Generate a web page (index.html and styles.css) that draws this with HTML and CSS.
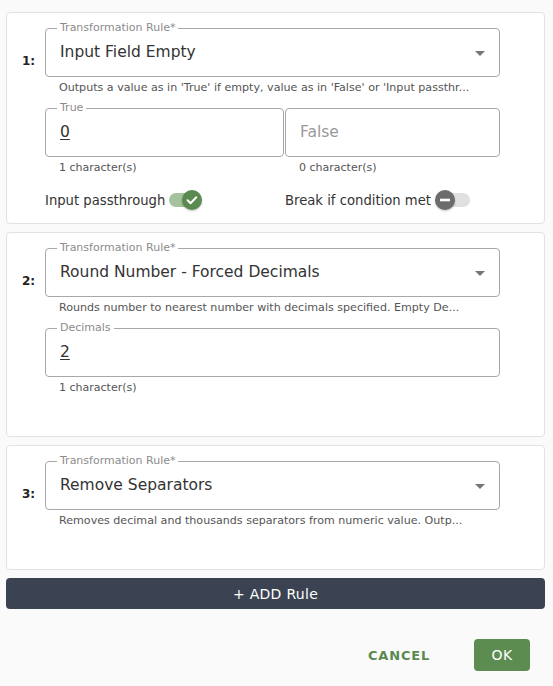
FILE: index.html
```html
<!DOCTYPE html>
<html lang="en">
<head>
<meta charset="utf-8">
<title>Transformation Rules</title>
<link rel="stylesheet" href="styles.css">
</head>
<body>
<div class="page">
  <section class="card">
    <div class="num">1:</div>
    <div class="rule">
      <fieldset class="field">
        <legend>Transformation Rule*</legend>
        <div class="select-row"><span class="value">Input Field Empty</span><span class="caret"></span></div>
      </fieldset>
      <div class="helper">Outputs a value as in 'True' if empty, value as in 'False' or 'Input passthr...</div>
    </div>
    <div class="params params--two">
      <div class="param">
        <fieldset class="field">
          <legend>True</legend>
          <span class="value value--u">0</span>
        </fieldset>
        <div class="count">1 character(s)</div>
      </div>
      <div class="param">
        <fieldset class="field">
          <legend class="ghost"></legend>
          <span class="value value--ph">False</span>
        </fieldset>
        <div class="count">0 character(s)</div>
      </div>
    </div>
    <div class="toggles">
      <div class="toggle">
        <span class="toggle-label">Input passthrough</span>
        <span class="switch switch--on">
          <span class="track"></span>
          <span class="thumb"><svg width="20" height="20" viewBox="0 0 20 20"><path d="M5.6 10.3l2.9 2.9 5.8-6" fill="none" stroke="#fff" stroke-width="2" stroke-linecap="round" stroke-linejoin="round"/></svg></span>
        </span>
      </div>
      <div class="toggle">
        <span class="toggle-label">Break if condition met</span>
        <span class="switch switch--off">
          <span class="track"></span>
          <span class="thumb"><svg width="20" height="20" viewBox="0 0 20 20"><path d="M5 10h10" fill="none" stroke="#fff" stroke-width="2.6"/></svg></span>
        </span>
      </div>
    </div>
  </section>

  <section class="card card--tall">
    <div class="num">2:</div>
    <div class="rule">
      <fieldset class="field">
        <legend>Transformation Rule*</legend>
        <div class="select-row"><span class="value">Round Number - Forced Decimals</span><span class="caret"></span></div>
      </fieldset>
      <div class="helper">Rounds number to nearest number with decimals specified. Empty De...</div>
    </div>
    <div class="params">
      <div class="param">
        <fieldset class="field">
          <legend>Decimals</legend>
          <span class="value value--u">2</span>
        </fieldset>
        <div class="count">1 character(s)</div>
      </div>
    </div>
  </section>

  <section class="card card--tall">
    <div class="num">3:</div>
    <div class="rule">
      <fieldset class="field">
        <legend>Transformation Rule*</legend>
        <div class="select-row"><span class="value">Remove Separators</span><span class="caret"></span></div>
      </fieldset>
      <div class="helper">Removes decimal and thousands separators from numeric value. Outp...</div>
    </div>
  </section>

  <button class="add-btn" type="button">+ ADD Rule</button>

  <div class="footer">
    <button class="btn-cancel" type="button">CANCEL</button>
    <button class="btn-ok" type="button">OK</button>
  </div>
</div>
</body>
</html>
```

FILE: styles.css
```css
* { box-sizing: border-box; }

html, body {
  margin: 0;
  padding: 0;
  background: #fafafa;
  font-family: "DejaVu Sans", "Liberation Sans", sans-serif;
  color: #333;
}

.page {
  width: 553px;
  padding: 12px 8px 0 6px;
  display: flex;
  flex-direction: column;
  gap: 8px;
}

.card {
  background: #fff;
  border: 1px solid #e2e2e2;
  border-radius: 4px;
  padding: 9px 0 11px 14px;
  display: grid;
  grid-template-columns: 24px 455px;
  align-items: start;
}

.card--tall { padding-bottom: 41px; }

.num {
  grid-column: 1;
  grid-row: 1;
  align-self: center;
  font-size: 12px;
  font-weight: bold;
  color: #222;
  padding-left: 1px;
  padding-top: 4px;
}

.rule, .params, .toggles { grid-column: 2; }
.rule { grid-row: 1; }

.field {
  margin: 0;
  padding: 9px 14px 15px;
  border: 1px solid #a8a8a8;
  border-radius: 4px;
  min-width: 0;
}

.field legend {
  font-size: 11px;
  line-height: 12px;
  height: 12px;
  padding: 0 3px;
  margin-left: -3px;
  color: #8c8c8c;
}

.field legend.ghost {
  padding: 0;
  width: 0;
  margin: 0;
}

.value {
  display: block;
  font-size: 15.5px;
  line-height: 18px;
  color: #333;
  white-space: nowrap;
}

.value--u { text-decoration: underline; text-underline-offset: 2px; }
.value--ph { color: #9a9a9a; }

.select-row {
  display: flex;
  align-items: center;
  justify-content: space-between;
}

.caret {
  width: 0;
  height: 0;
  border-left: 5px solid transparent;
  border-right: 5px solid transparent;
  border-top: 5px solid #767676;
  margin-top: 2px;
}

.helper, .count {
  font-size: 11px;
  line-height: 14px;
  color: #555;
  margin-top: 4px;
  padding: 0 14px;
  white-space: nowrap;
}

.helper { font-size: 11.1px; }

.params { margin-top: 7px; }

.params--two {
  display: grid;
  grid-template-columns: 239px 215px;
  column-gap: 1px;
}

.toggles {
  margin-top: 13px;
  display: grid;
  grid-template-columns: 240px 215px;
  height: 24px;
}

.toggle {
  display: flex;
  align-items: center;
  gap: 4px;
}

.toggle-label {
  font-size: 13.2px;
  color: #333;
}

.switch {
  position: relative;
  width: 35px;
  height: 20px;
  display: inline-block;
}

.track {
  position: absolute;
  top: 3px;
  height: 14px;
  width: 30px;
  border-radius: 7px;
}

.thumb {
  position: absolute;
  top: 0;
  width: 20px;
  height: 20px;
  border-radius: 50%;
  display: flex;
  box-shadow: 0 1px 2px rgba(0,0,0,0.25);
}

.switch--on .track { left: 0; background: #a4c29c; }
.switch--on .thumb { left: 13px; background: #5b8a50; }
.switch--off .track { left: 5px; background: #e0e0e0; }
.switch--off .thumb { left: 0; background: #6c6c6c; }

.add-btn {
  width: 539px;
  height: 31px;
  border: 0;
  border-radius: 4px;
  background: #3b4353;
  color: #fff;
  font-family: inherit;
  font-size: 14px;
  letter-spacing: 0.3px;
  padding: 0;
}

.footer {
  margin-top: 22px;
  display: flex;
  justify-content: flex-end;
  align-items: center;
  padding-right: 15px;
}

.btn-cancel {
  border: 0;
  background: transparent;
  color: #5a8a4f;
  font-family: inherit;
  font-weight: bold;
  font-size: 13px;
  letter-spacing: 0.8px;
  padding: 0;
  margin-right: 44px;
}

.btn-ok {
  width: 56px;
  height: 32px;
  border: 0;
  border-radius: 4px;
  background: #5d8c51;
  color: #fff;
  font-family: inherit;
  font-size: 14px;
  letter-spacing: 0.5px;
  padding: 0;
}
```
